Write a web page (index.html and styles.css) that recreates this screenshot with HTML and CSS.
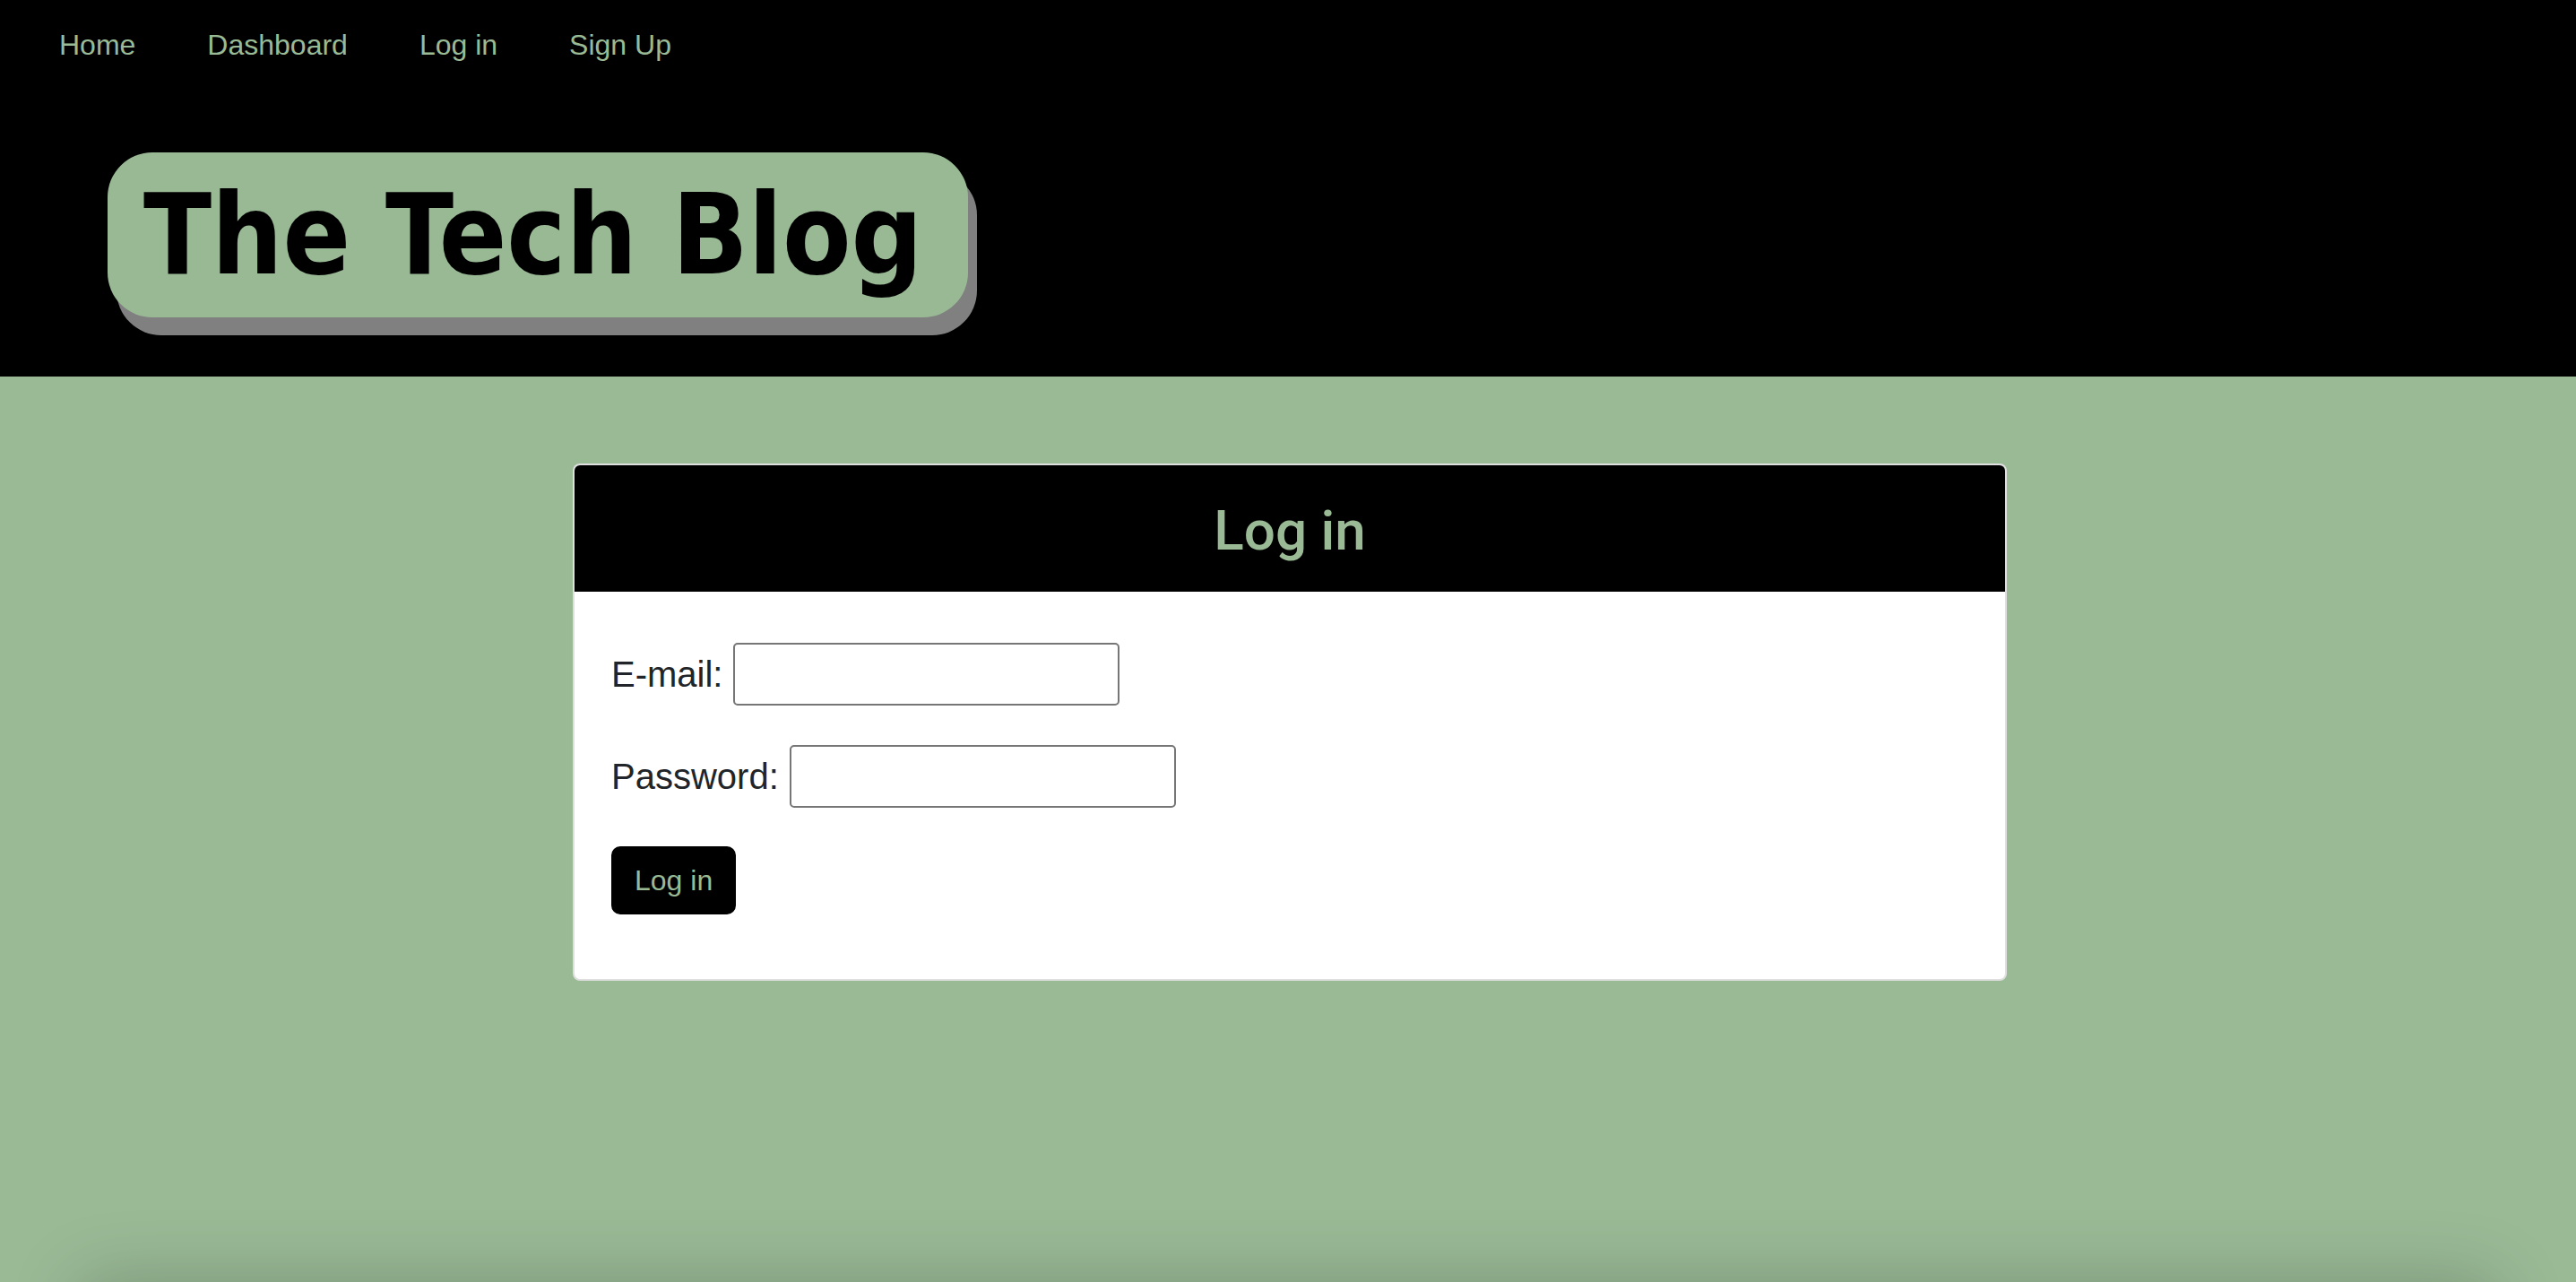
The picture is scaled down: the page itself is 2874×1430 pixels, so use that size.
FILE: index.html
```html
<!DOCTYPE html>
<html lang="en">
<head>
<meta charset="utf-8">
<title>The Tech Blog</title>
<link rel="stylesheet" href="styles.css">
</head>
<body>
<header class="site-header">
  <nav class="nav">
    <a class="nav-link" href="#">Home</a>
    <a class="nav-link" href="#">Dashboard</a>
    <a class="nav-link" href="#">Log in</a>
    <a class="nav-link" href="#">Sign Up</a>
  </nav>
  <h1 class="brand">The Tech Blog</h1>
</header>
<main class="main">
  <section class="card">
    <div class="card-header">
      <h2 class="card-title">Log in</h2>
    </div>
    <form class="card-body">
      <div class="form-row">
        <label class="form-label" for="email">E-mail:</label>
        <input class="form-input" id="email" type="text">
      </div>
      <div class="form-row">
        <label class="form-label" for="password">Password:</label>
        <input class="form-input" id="password" type="password">
      </div>
      <button class="btn" type="button">Log in</button>
    </form>
  </section>
</main>
<div class="footer-shadow"></div>
</body>
</html>
```

FILE: styles.css
```css
* { box-sizing: border-box; }

html, body {
  margin: 0;
  padding: 0;
}

body {
  font-family: "Liberation Sans", Arial, sans-serif;
  background: #9aba96;
  min-height: 100vh;
  color: #212529;
  overflow: hidden;
}

.site-header {
  background: #000;
  padding: 26px 0 66px 0;
}

.nav {
  display: flex;
  padding-left: 26px;
}

.nav-link {
  display: block;
  padding: 0 40px;
  font-size: 32px;
  line-height: 48px;
  color: #9aba96;
  text-decoration: none;
}

.brand {
  margin: 96px 0 0 120px;
  width: 960px;
  height: 184px;
  padding: 21px 0 0 40px;
  background: #99b995;
  border-radius: 50px;
  box-shadow: 10px 20px 0 #808080;
  font-family: "DejaVu Sans Condensed", "DejaVu Sans", sans-serif;
  font-stretch: condensed;
  font-weight: bold;
  font-size: 124px;
  line-height: 142px;
  color: #000;
  white-space: nowrap;
}

.main {
  display: flex;
  justify-content: center;
  padding-top: 97px;
}

.card {
  width: 1600px;
  background: #fff;
  border: 2px solid rgba(0, 0, 0, 0.125);
  border-radius: 8px;
  margin-left: 4px;
}

.card-header {
  background: #000;
  border-radius: 6px 6px 0 0;
  padding: 34px 0 30px;
  text-align: center;
}

.card-title {
  margin: 0;
  font-family: Roboto, "Liberation Sans", sans-serif;
  font-weight: 500;
  font-size: 62px;
  line-height: 77px;
  color: #9aba96;
}

.card-body {
  padding: 57px 40px 72px 41px;
  display: flex;
  flex-direction: column;
  align-items: flex-start;
}

.form-row {
  display: flex;
  align-items: center;
  gap: 12px;
  margin-bottom: 44px;
}

.form-label {
  font-size: 40px;
  line-height: 60px;
  color: #212529;
}

.form-input {
  width: 431px;
  height: 70px;
  border: 2px solid #767676;
  border-radius: 5px;
  background: #fff;
  font-size: 32px;
  padding: 4px 8px;
}

.btn {
  margin-top: -1px;
  font-family: "Liberation Sans", Arial, sans-serif;
  font-size: 32px;
  line-height: 48px;
  padding: 12px 24px;
  border: 2px solid #000;
  border-radius: 10px;
  background: #000;
  color: #9aba96;
}

.footer-shadow {
  position: fixed;
  left: 90px;
  right: 90px;
  top: 100%;
  height: 120px;
  box-shadow: 0 0 80px rgba(0, 0, 0, 0.22);
}
```
